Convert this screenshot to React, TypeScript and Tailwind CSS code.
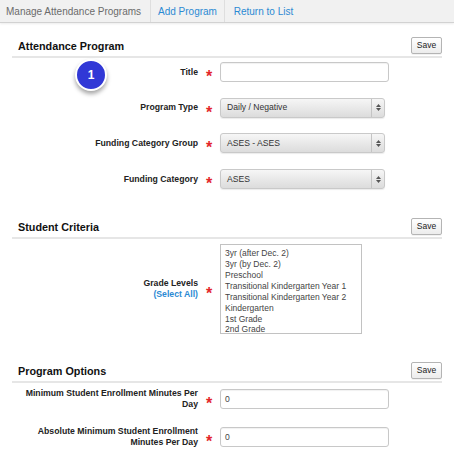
import React from 'react';

const grades = [
  '3yr (after Dec. 2)',
  '3yr (by Dec. 2)',
  'Preschool',
  'Transitional Kindergarten Year 1',
  'Transitional Kindergarten Year 2',
  'Kindergarten',
  '1st Grade',
  '2nd Grade',
];

function Req() {
  return (
    <div className="flex w-[22px] shrink-0 justify-center">
      <span className="translate-y-[5px] text-[16px] font-bold leading-[16px] text-[#e3262b]">*</span>
    </div>
  );
}

function Label({ children }: { children: React.ReactNode }) {
  return (
    <div className="w-[186px] shrink-0 text-right text-[8.7px] font-bold leading-[11px] text-[#222]">
      {children}
    </div>
  );
}

function SectionHeader({ title }: { title: string }) {
  return (
    <div className="flex items-end justify-between border-b-2 border-[#e6e6e6] pb-[2px]">
      <h2 className="pb-[1px] pl-[6px] text-[10.8px] font-bold leading-[14px] text-[#111]">{title}</h2>
      <button className="h-[17px] w-[31px] rounded-[2px] border border-[#b4b4b4] bg-gradient-to-b from-white to-[#ececec] text-[8.5px] leading-none text-[#222] shadow-[0_1px_0_rgba(0,0,0,0.05)]">
        Save
      </button>
    </div>
  );
}

function TextInput({ value = '' }: { value?: string }) {
  return (
    <div className="flex h-[20px] w-[169px] items-center rounded-[3px] border border-[#c8c8c8] bg-white pl-[4px] text-[8.6px] text-[#444] shadow-[inset_0_1px_1px_rgba(0,0,0,0.06)]">
      {value}
    </div>
  );
}

function Select({ value }: { value: string }) {
  return (
    <div className="flex h-[20px] w-[165px] items-center rounded-[3px] border border-[#c9c9c9] bg-gradient-to-b from-[#f6f6f6] to-[#dcdcdc] text-[8.6px] text-[#333] shadow-[0_1px_1px_rgba(0,0,0,0.08)]">
      <span className="flex-1 pl-[6px]">{value}</span>
      <div className="flex h-full w-[13px] flex-col items-center justify-center gap-[1px] border-l border-[#c4c4c4]">
        <svg width="5" height="3" viewBox="0 0 5 3"><path d="M2.5 0 L5 3 L0 3 Z" fill="#555" /></svg>
        <svg width="5" height="3" viewBox="0 0 5 3"><path d="M0 0 L5 0 L2.5 3 Z" fill="#555" /></svg>
      </div>
    </div>
  );
}

function Row({ label, children }: { label: React.ReactNode; children: React.ReactNode }) {
  return (
    <div className="flex items-center">
      <Label>{label}</Label>
      <Req />
      {children}
    </div>
  );
}

export default function App() {
  return (
    <div className="relative h-[460px] w-[454px] overflow-hidden bg-white font-['Liberation_Sans',Arial,sans-serif]">
      <nav className="flex h-[23px] items-stretch border-b border-[#d2d2d2] bg-[#f1f1f1] text-[10px] shadow-[0_1px_2px_rgba(0,0,0,0.08)]">
        <div className="flex w-[150px] items-center pl-[6px] text-[#6b6b6b]">Manage Attendance Programs</div>
        <div className="flex w-[74px] items-center justify-center border-l border-[#dedede] text-[#2b8ad3]">Add Program</div>
        <div className="flex w-[78px] items-center justify-center border-l border-[#dedede] text-[#2b8ad3]">Return to List</div>
      </nav>

      <main className="px-[12px]">
        <section className="mt-[14px]">
          <SectionHeader title="Attendance Program" />
          <div className="mt-[4px] flex flex-col gap-[15.7px]">
            <Row label="Title">
              <TextInput />
            </Row>
            <Row label="Program Type">
              <Select value="Daily / Negative" />
            </Row>
            <Row label="Funding Category Group">
              <Select value="ASES - ASES" />
            </Row>
            <Row label="Funding Category">
              <Select value="ASES" />
            </Row>
          </div>
        </section>

        <section className="mt-[29px]">
          <SectionHeader title="Student Criteria" />
          <div className="mt-[5px]">
            <Row
              label={
                <>
                  <div>Grade Levels</div>
                  <div className="text-[#2b8ad3]">(Select All)</div>
                </>
              }
            >
              <div className="h-[90px] w-[142px] overflow-hidden border border-[#c2c2c2] bg-white pl-[4px] pt-[3px] text-[8.5px] leading-[10.9px] text-[#444]">
                {grades.map((g) => (
                  <div key={g} className="whitespace-nowrap">{g}</div>
                ))}
              </div>
            </Row>
          </div>
        </section>

        <section className="mt-[28px]">
          <SectionHeader title="Program Options" />
          <div className="mt-[5px] flex flex-col gap-[16px]">
            <Row label="Minimum Student Enrollment Minutes Per Day">
              <TextInput value="0" />
            </Row>
            <Row label={<><div>Absolute Minimum Student Enrollment</div><div>Minutes Per Day</div></>}>
              <TextInput value="0" />
            </Row>
          </div>
        </section>
      </main>

      <div className="absolute left-[75px] top-[59px] flex h-[32px] w-[32px] items-center justify-center rounded-full border-2 border-white bg-[#3138d6] text-[12px] font-bold text-white shadow-[0_3px_4px_rgba(0,0,0,0.35)]">
        1
      </div>
    </div>
  );
}
